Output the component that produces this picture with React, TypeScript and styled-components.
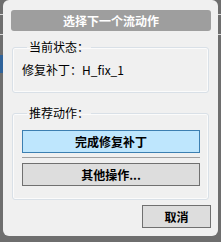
import styled, { createGlobalStyle } from "styled-components";

const GlobalStyle = createGlobalStyle`
  html, body {
    margin: 0;
    padding: 0;
    background: #6e6e6e;
  }
  body {
    font-family: "Noto Sans CJK SC", "Noto Sans", sans-serif;
    font-size: 12px;
    color: #000;
  }
`;

const Backdrop = styled.div`
  position: relative;
  width: 221px;
  height: 242px;
  overflow: hidden;
  background: #6e6e6e;
`;

// bits of the window behind the dialog, peeking out at the edges
const EdgeMark = styled.div<{ $left: number; $top: number; $h: number; $color: string }>`
  position: absolute;
  left: ${(p) => p.$left}px;
  top: ${(p) => p.$top}px;
  width: 3px;
  height: ${(p) => p.$h}px;
  background: ${(p) => p.$color};
`;

const Dialog = styled.div`
  position: absolute;
  left: 3px;
  top: 0;
  width: 215px;
  height: 236px;
  box-sizing: border-box;
  background: #f0f0f0;
  border-radius: 6px;
  padding: 10px 7px 8px 8px;
  display: flex;
  flex-direction: column;
`;

const TitleBar = styled.div`
  height: 21px;
  width: 200px;
  background: #9e9e9e;
  border-radius: 3px;
  color: #fff;
  font-weight: bold;
  font-size: 12px;
  line-height: 21px;
  text-align: center;
`;

const Group = styled.fieldset<{ $mt: number }>`
  margin: ${(p) => p.$mt}px 0 0 1px;
  width: 197px;
  box-sizing: border-box;
  border: 1px solid #d9e0e7;
  border-radius: 3px;
  box-shadow: inset 0 0 0 1px #fbfbfb;
  padding: 0 8px 0 9px;
  min-width: 0;
`;

const Legend = styled.legend`
  padding: 0 2px;
  margin-left: 5px;
  line-height: 14px;
  font-size: 12px;
`;

const StatusText = styled.div`
  padding: 9px 0 15px 0;
  line-height: 14px;
`;

const Actions = styled.div`
  display: flex;
  flex-direction: column;
  padding: 10px 0 13px 0;
`;

const ActionButton = styled.button<{ $primary?: boolean }>`
  height: 23px;
  width: 178px;
  box-sizing: border-box;
  margin: 0;
  padding: 0;
  font-family: inherit;
  font-size: 12px;
  font-weight: bold;
  color: #000;
  border: 1px solid ${(p) => (p.$primary ? "#3c7fb1" : "#707070")};
  background: ${(p) => (p.$primary ? "#bee6fd" : "#dddddd")};
  border-radius: 0;
`;

const Divider = styled.div`
  height: 1px;
  width: 178px;
  background: #a0a0a0;
  margin: 4px 0 5px 0;
`;

const Footer = styled.div`
  display: flex;
  justify-content: flex-end;
  margin-top: 5px;
`;

const CancelButton = styled(ActionButton)`
  width: 69px;
`;

export default function App() {
  return (
    <>
      <GlobalStyle />
      <Backdrop>
        <EdgeMark $left={0} $top={14} $h={1} $color="#d8d8d8" />
        <EdgeMark $left={0} $top={34} $h={1} $color="#d8d8d8" />
        <EdgeMark $left={0} $top={55} $h={18} $color="#30639a" />
        <EdgeMark $left={218} $top={14} $h={1} $color="#d8d8d8" />
        <EdgeMark $left={218} $top={34} $h={1} $color="#d8d8d8" />
        <Dialog>
          <TitleBar>选择下一个流动作</TitleBar>
          <Group $mt={9}>
            <Legend>当前状态：</Legend>
            <StatusText>修复补丁：H_fix_1</StatusText>
          </Group>
          <Group $mt={13}>
            <Legend>推荐动作：</Legend>
            <Actions>
              <ActionButton $primary>完成修复补丁</ActionButton>
              <Divider />
              <ActionButton>其他操作...</ActionButton>
            </Actions>
          </Group>
          <Footer>
            <CancelButton>取消</CancelButton>
          </Footer>
        </Dialog>
      </Backdrop>
    </>
  );
}
